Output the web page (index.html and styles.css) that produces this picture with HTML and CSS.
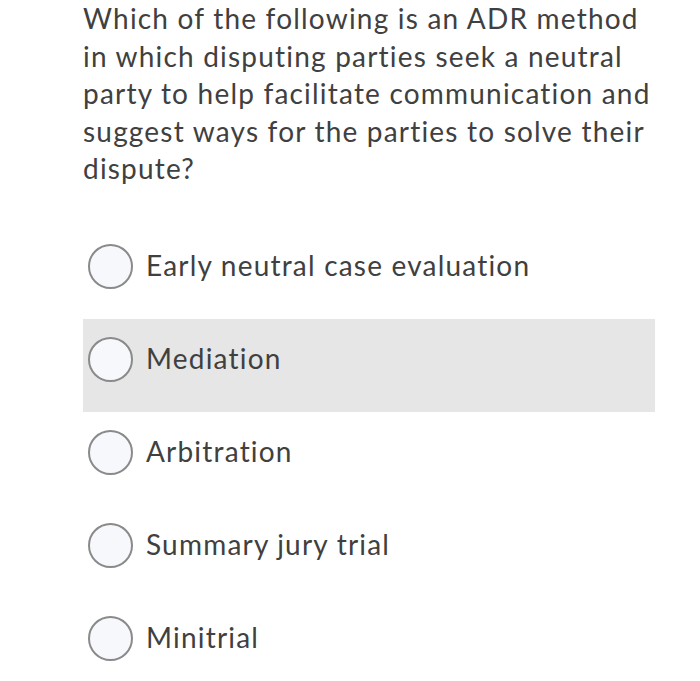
FILE: index.html
```html
<!DOCTYPE html>
<html>
<head>
<meta charset="utf-8">
<link rel="stylesheet" href="styles.css">
</head>
<body>
<div class="page">
  <p class="question">Which of the following is an ADR method in which disputing parties seek a neutral party to help facilitate communication and suggest ways for the parties to solve their dispute?</p>
  <div class="options">
    <div class="option"><span class="radio"></span><span class="label">Early neutral case evaluation</span></div>
    <div class="option hover"><span class="radio"></span><span class="label">Mediation</span></div>
    <div class="option"><span class="radio"></span><span class="label">Arbitration</span></div>
    <div class="option"><span class="radio"></span><span class="label">Summary jury trial</span></div>
    <div class="option"><span class="radio"></span><span class="label">Minitrial</span></div>
  </div>
</div>
</body>
</html>
```
FILE: styles.css
```css
html, body {
  margin: 0;
  padding: 0;
  background: #ffffff;
}
.page {
  padding-left: 83px;
  width: 572px;
  font-family: Lato, "Open Sans", sans-serif;
  color: #404040;
  letter-spacing: 1.2px;
}
.question {
  margin: 0;
  font-size: 28px;
  line-height: 37.5px;
}
.options {
  margin-top: 38.5px;
  display: flex;
  flex-direction: column;
}
.option {
  height: 93px;
  box-sizing: border-box;
  padding-bottom: 12px;
  display: flex;
  align-items: center;
  gap: 13px;
}
.option.hover {
  background: #e6e6e6;
}
.radio {
  width: 45px;
  height: 45px;
  box-sizing: border-box;
  margin-left: 5px;
  border: 2px solid #8a8a8a;
  border-radius: 50%;
  background: #f7f8fc;
  flex: none;
}
.label {
  font-size: 28px;
  line-height: 34px;
  padding-bottom: 3px;
}
```
